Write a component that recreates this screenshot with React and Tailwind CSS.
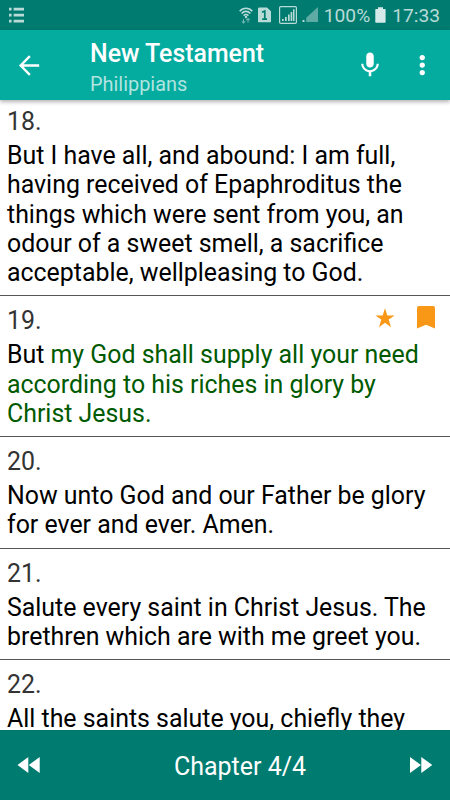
const verses = [
  {
    number: 18,
    text: "But I have all, and abound: I am full, having received of Epaphroditus the things which were sent from you, an odour of a sweet smell, a sacrifice acceptable, wellpleasing to God.",
  },
  {
    number: 19,
    text: "But ",
    highlight:
      "my God shall supply all your need according to his riches in glory by Christ Jesus.",
    marked: true,
  },
  {
    number: 20,
    text: "Now unto God and our Father be glory for ever and ever. Amen.",
  },
  {
    number: 21,
    text: "Salute every saint in Christ Jesus. The brethren which are with me greet you.",
  },
  {
    number: 22,
    text: "All the saints salute you, chiefly they",
  },
];

function StatusBar() {
  return (
    <div className="flex h-[30px] shrink-0 items-center bg-[#007b70] pl-2 pr-[10px] text-[#b9dbd8]">
      <svg width="17" height="16" viewBox="0 0 17 16" fill="currentColor">
        <path d="M1 .8h2.600v2.600H1zM5.600 .8h10.400v2.600H5.600zM1 6.800h2.600v2.600H1zM5.600 6.800h10.400v2.600H5.600zM1 12.800h2.600v2.600H1zM5.600 12.800h10.400v2.600H5.600z" />
      </svg>
      {/* Wi-Fi */}
      <svg className="ml-auto" width="14" height="18" viewBox="0 0 14 18" fill="none" stroke="currentColor">
        <path d="M.7 5.2C4.2 1.3 9.8 1.3 13.3 5.2M2.6 7.5c2.5-2.8 6.3-2.8 8.8 0M4.6 9.6c1.5-1.4 3.3-1.4 4.8 0" strokeWidth="1.6" />
        <circle cx="7" cy="11" r="1.2" fill="currentColor" stroke="none" />
        <path d="M4.5 17v-4M2.8 15.400 4.500 17l1.700-1.600M9 12.500v4M7.300 14.200 9 12.600l1.700 1.600" strokeWidth="1.1" opacity=".6" />
      </svg>
      {/* SIM */}
      <svg className="ml-[5px]" width="13" height="16" viewBox="0 0 13 16">
        <path d="M1.2 .5H9l4 3.8v10.200a.8.8 0 0 1-.8.8H.8a.8.8 0 0 1-.8-.8V1.700A1.200 1.200 0 0 1 1.200 .5Z" fill="currentColor" />
        <path d="M4 5.300 6.800 4v8.200M4.200 12.200H9" fill="none" stroke="#007b70" strokeWidth="1.7" />
      </svg>
      {/* Signal */}
      <svg className="ml-[8px]" width="18" height="18" viewBox="0 0 18 18">
        <rect x=".6" y=".6" width="16.8" height="16.8" rx="1.2" fill="none" stroke="currentColor" strokeWidth="1.2" />
        <path d="M3 13h1.7v2H3zM6 11h1.7v4H6zM9 8.5h1.7V15H9zM11.6 6h1.7v9h-1.7zM14 3.2h1.5V15H14z" fill="currentColor" />
      </svg>
      <svg className="ml-[5px]" width="17" height="16" viewBox="0 0 17 16">
        <path d="M16 0V15H4.200V10.800Z" fill="currentColor" opacity=".5" />
        <path d="M.5 13h2v2h-2z" fill="currentColor" />
      </svg>
      <span className="ml-[5px] pt-[2px] text-[19.2px] leading-[28px]">100%</span>
      <svg className="ml-[5px] mb-px" width="11" height="16" viewBox="0 0 11 16" fill="#d6ebe9">
        <path d="M3 .3h5V2h2a.6.6 0 0 1 .6.600V15a.7.7 0 0 1-.7.7H1a.7.7 0 0 1-.7-.7V2.600A.6.6 0 0 1 .9 2H3Z" />
      </svg>
      <span className="ml-[6px] pt-[2px] text-[19.2px] leading-[28px]">17:33</span>
    </div>
  );
}

function Toolbar() {
  return (
    <header className="z-10 flex h-[70px] shrink-0 items-center bg-[#04ab9f] text-white shadow-[0_2px_4px_rgba(0,0,0,0.3)]">
      <button aria-label="Back" className="ml-[15px]">
        <svg width="29" height="29" viewBox="0 0 24 24" fill="none" stroke="currentColor" strokeWidth="2">
          <path d="M20 12H5M12.300 4.300 4.700 12l7.600 7.700" />
        </svg>
      </button>
      <div className="ml-[46px] flex-1 pt-[5px]">
        <h1 className="text-[24.9px] leading-[30px] font-medium">New Testament</h1>
        <p className="mt-[4px] text-[19.9px] leading-[24px] text-[#b2e4e0]">Philippians</p>
      </div>
      <button aria-label="Voice search" className="mr-[22px]">
        <svg width="30" height="30" viewBox="0 0 24 24" fill="currentColor">
          <path d="M12 14c1.660 0 3-1.340 3-3V5c0-1.660-1.340-3-3-3S9 3.340 9 5v6c0 1.660 1.340 3 3 3zm5.300-3c0 3-2.540 5.100-5.300 5.100S6.700 14 6.700 11H5c0 3.410 2.720 6.230 6 6.720V21h2v-3.280c3.280-.48 6-3.300 6-6.720h-1.700z" />
        </svg>
      </button>
      <button aria-label="More options" className="mr-[13px]">
        <svg width="30" height="30" viewBox="0 0 24 24" fill="currentColor">
          <circle cx="12.200" cy="6" r="2.100" />
          <circle cx="12.200" cy="12" r="2.100" />
          <circle cx="12.200" cy="18" r="2.100" />
        </svg>
      </button>
    </header>
  );
}

function Verse({ number, text, highlight, marked }) {
  return (
    <li className="border-b border-[#555] px-[7px] pt-[10px] pb-[8px]">
      <div className="flex justify-between">
        <span className="text-[#333]">{number}.</span>
        {marked && (
          <span className="flex text-[#f99716]">
            <svg className="mr-[20px]" width="24" height="24" viewBox="0 0 24 24" fill="currentColor">
              <path d="m12 2.300 2.300 7.100h7.300l-5.900 4.200 2.300 7.600L12 16.700l-6 4.500 2.300-7.600-5.900-4.200h7.300Z" />
            </svg>
            <svg className="mr-[8px]" width="18" height="23" viewBox="0 0 18 23" fill="currentColor">
              <path d="M2 0h14a2 2 0 0 1 2 2v20.500l-9-3.700-9 3.700V2a2 2 0 0 1 2-2Z" />
            </svg>
          </span>
        )}
      </div>
      <p className="mt-[5px] text-black">
        {text}
        {highlight && <span className="text-[#005a00]">{highlight}</span>}
      </p>
    </li>
  );
}

function ChapterBar() {
  return (
    <footer className="z-10 flex h-[70px] shrink-0 items-center bg-[#007b70] px-[17px] text-white">
      <button aria-label="Previous chapter">
        <svg width="23" height="16" viewBox="0 0 23 16" fill="currentColor">
          <path d="M11.300 0v16L.500 8ZM22.700 0v16L11.800 8Z" />
        </svg>
      </button>
      <span className="ml-[30px] flex-1 pt-[3px] text-center text-[25px] leading-[30px]">Chapter 4/4</span>
      <button aria-label="Next chapter">
        <svg width="23" height="16" viewBox="0 0 23 16" fill="currentColor">
          <path d="M0 0v16l11-8ZM11.300 0v16l11-8Z" />
        </svg>
      </button>
    </footer>
  );
}

export default function App() {
  return (
    <div className="flex h-screen w-full flex-col overflow-hidden bg-white font-[Roboto,sans-serif]">
      <StatusBar />
      <Toolbar />
      <main className="min-h-0 flex-1 overflow-hidden">
        <ul className="-mt-[3px] text-[24.9px] leading-[29.2px]">
          {verses.map((verse) => (
            <Verse key={verse.number} {...verse} />
          ))}
        </ul>
      </main>
      <ChapterBar />
    </div>
  );
}
